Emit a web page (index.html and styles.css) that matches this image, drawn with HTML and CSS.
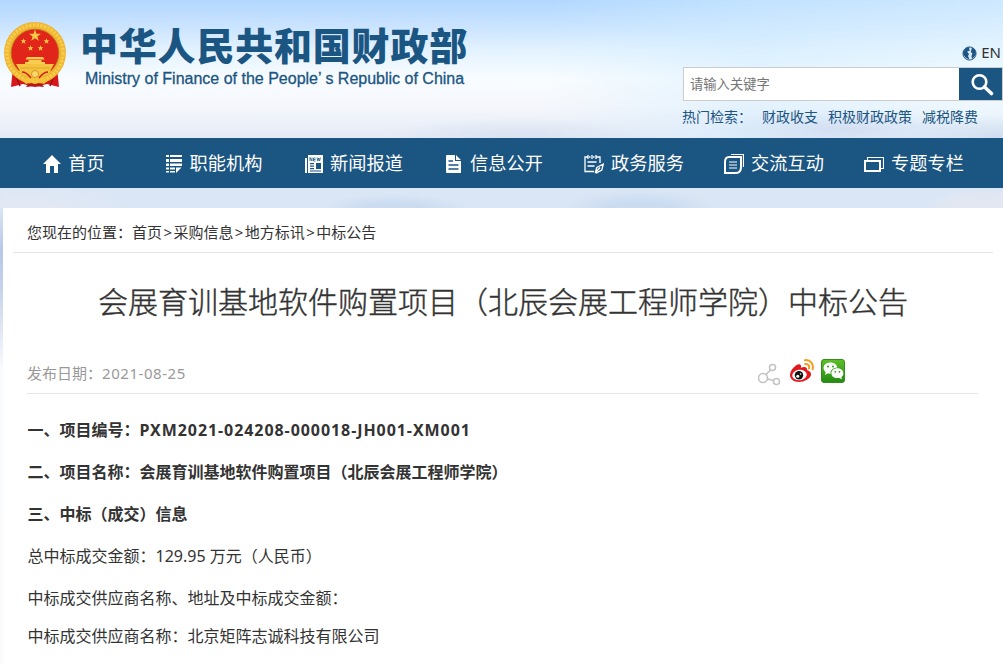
FILE: index.html
```html
<!DOCTYPE html>
<html lang="zh-CN">
<head>
    <meta charset="UTF-8">
    <meta name="viewport" content="width=device-width, initial-scale=1.0">
    <title>会展育训基地软件购置项目（北辰会展工程师学院）中标公告</title>
    <link rel="stylesheet" href="styles.css">
</head>
<body>
    <div class="header">
        <div class="logo">
            <svg class="emblem" viewBox="0 0 62 66">
                <path d="M9 45L7 65l12-3 12 3 12-3 12 3-2-20z" fill="#d6181d"/>
                <path d="M11 51l5 13M51 51l-5 13" stroke="#9f1014" stroke-width="1.5"/>
                <circle cx="31" cy="31" r="27.2" fill="none" stroke="#eeb531" stroke-width="7.5"/>
                <circle cx="31" cy="31" r="28" fill="none" stroke="#f7cc4c" stroke-width="3.5" stroke-dasharray="2.5 1.2"/>
                <circle cx="31" cy="31" r="23.8" fill="#e1251b" stroke="#bb6d16" stroke-width=".8"/>
                <path d="M12 42h38l-4 7-7 4H23l-7-4z" fill="#f4c441"/>
                <path d="M23 35h16l1.500 2.500h-19zM24.500 38h13v2h-13zM21 40h20v2H21z" fill="#f9cd50"/>
                <path d="M16 46h30" stroke="#e5a62a"/>
                <path d="M31 7.500l1.500 4.200 4.500.1-3.600 2.700 1.300 4.300-3.700-2.500-3.700 2.500 1.300-4.300-3.600-2.700 4.500-.1z" fill="#f7c944"/>
                <g fill="#f7c944">
                    <path id="star" d="M19.500 16.200l.8 2 2.100.1-1.600 1.300.6 2.100-1.900-1.200-1.800 1.200.5-2.100-1.600-1.300 2.100-.1z"/>
                    <use href="#star" x="23"/>
                    <use href="#star" x="7" y="7"/>
                    <use href="#star" x="17" y="7"/>
                </g>
                <path d="M15 49c6-1 9 1 11 3 3-4 7-4 10 0 2-2 5-4 11-3-3 3-6 5-10 6l7 3-4 4-9-4-9 4-4-4 7-3c-4-1-8-3-11-6z" fill="#f5c33a"/>
                <path d="M18 50c5 0 7 4 9 6M44 50c-5 0-7 4-9 6" fill="none" stroke="#d21a1b" stroke-width="1.500"/>
                <circle cx="31" cy="52" r="3.500" fill="#f9d76b" stroke="#c9871b" stroke-width=".8"/>
                <path d="M22 65c2-4 6-5 9-2 3-3 7-2 9 2-6-1-12-1-18 0z" fill="#b61619"/>
            </svg>
            <div class="logo-text">
                <div class="logo-cn">中华人民共和国财政部</div>
                <div class="logo-en">Ministry of Finance of the People’ s Republic of China</div>
            </div>
        </div>
        <div class="tools">
            <a class="lang">
                <svg width="15" height="15" viewBox="0 0 15 15">
                    <circle cx="7.500" cy="7.500" r="6.600" fill="#d5e8f6" stroke="#1b5582" stroke-width=".9"/>
                    <path d="M1 6l3-4 4-1-1 2 1 1.500-3 1L7 8l-1 2 1.500 3.500L4 12 1.500 9zM10 1.500l3 2L14 8l-2 3-2 2-.5-3 1-2.500L8.800 6z" fill="#1b5582"/>
                </svg>
                <span>EN</span>
            </a>
            <div class="search">
                <input type="text" placeholder="请输入关键字">
                <button class="search-btn">
                    <svg width="24" height="24" viewBox="0 0 24 24" fill="none" stroke="#fff">
                        <circle cx="9.500" cy="9" r="6.800" stroke-width="2.600"/>
                        <path d="M14.500 14l7 6.500" stroke-width="3.600" stroke-linecap="round"/>
                    </svg>
                </button>
            </div>
            <div class="hot">
                <span class="hot-label">热门检索：</span>
                <a>财政收支</a>
                <a>积极财政政策</a>
                <a>减税降费</a>
            </div>
        </div>
    </div>

    <div class="nav">
        <a>
            <svg width="18" height="18" viewBox="0 0 18 18"><path d="M9 0l9 9h-3v9h-4v-7H7v7H3V9H0z" fill="#fff"/></svg>
            <span>首页</span>
        </a>
        <a>
            <svg width="17" height="18" viewBox="0 0 17 18" fill="#fff"><path d="M0 0h3v2H0zM4 0h12v2H4zM0 4h3v3H0zM4 4h12v3H4zM0 8.500h3v2.500H0zM4 8.500h12v2.500H4zM0 12.500h3v2H0zM4 12.500h5v2H4zM0 16h3v1.500H0zM4 16h5v1.500H4zM10 12.500h5.500L10 18z"/></svg>
            <span>职能机构</span>
        </a>
        <a>
            <svg width="18" height="18" viewBox="0 0 18 18">
                <path d="M0 3h2v15H0zM3 0h15v18H3z" fill="#fff"/>
                <path d="M5 6V2.500l2 3.500V2.500M10.500 3H8.500v3h2M8.500 4.500h2M12 2.500l.8 3.500.9-3 .9 3 .8-3.500" fill="none" stroke="#1b5582" stroke-width=".8"/>
                <path d="M11 8h5v6h-5zM5 8h4v1.200H5zM5 10.500h4v1.200H5zM5 13h4v1.200H5zM5 15.500h11v1H5z" fill="#1b5582"/>
            </svg>
            <span>新闻报道</span>
        </a>
        <a>
            <svg width="18" height="18" viewBox="0 0 18 18"><path d="M2 0h8v6h6v12H2q-1 0-1-1V1q0-1 1-1zM11 0l5 5h-5z" fill="#fff"/><path d="M3.500 6H8M3.500 10h10M3.500 14h10" stroke="#1b5582" stroke-width="1.300"/></svg>
            <span>信息公开</span>
        </a>
        <a>
            <svg width="20" height="20" viewBox="0 0 20 20" fill="none" stroke="#fff" stroke-width="1.300">
                <path d="M4 3H1v14.500h9M12 3h4v6M5 3h1.500M9 3h1.500M4 1v4M8 1v4M12 1v4M3.500 8h9M3.500 12h7"/>
                <path d="M19.300 10l-1.500 6-5.500 3-1-.5 1.500-5zM12 18l4-4.500"/>
            </svg>
            <span>政务服务</span>
        </a>
        <a>
            <svg width="20" height="20" viewBox="0 0 20 20" fill="none" stroke="#fff">
                <path d="M5 3h12v10q0 6-5 6H1V8q0-5 4-5z" stroke-width="2"/>
                <path d="M7 .5h12.500V13M5 8h8M5 11h8M5 14h8" stroke-width="1.200"/>
            </svg>
            <span>交流互动</span>
        </a>
        <a>
            <svg width="20" height="18" viewBox="0 0 20 18" fill="none" stroke="#fff">
                <path d="M1 6h15v10H1z" stroke-width="2"/>
                <path d="M3.500 5V2.500h16v11H17" stroke-width="1.100"/>
            </svg>
            <span>专题专栏</span>
        </a>
    </div>

    <div class="main">
        <div class="crumbs">您现在的位置：首页<i>&gt;</i>采购信息<i>&gt;</i>地方标讯<i>&gt;</i>中标公告</div>
        <h1>会展育训基地软件购置项目（北辰会展工程师学院）中标公告</h1>
        <div class="info">
            <div class="date">发布日期：<span>2021-08-25</span></div>
            <div class="share">
                <svg width="24" height="24" viewBox="0 0 24 24" fill="none" stroke="#c3c3c3" stroke-width="1.600">
                    <circle cx="5" cy="15" r="4.500"/><circle cx="14.500" cy="4.500" r="3"/><circle cx="18.500" cy="18.500" r="3"/>
                    <path d="M8 11.500L12.500 7M9.700 16l5.800 1.500"/>
                </svg>
                <svg width="25" height="25" viewBox="0 0 25 25">
                    <path d="M1 16C1 11 8 4 11 5.500c1.500.7 1 2.500.8 3.200 3-1.200 6.700-1.200 6.200 2.300 6 2 5 7-.5 10C10 25 1 22.500 1 16z" fill="#e1181d"/>
                    <ellipse cx="10.500" cy="16" rx="7.300" ry="5.200" fill="#fff" transform="rotate(-8 10.500 16)"/>
                    <circle cx="10" cy="16.200" r="4.200" fill="#111"/><circle cx="8.800" cy="17.300" r="1.500" fill="#fff"/><circle cx="11.600" cy="15" r=".8" fill="#fff"/>
                    <path d="M16 1.200c5-.8 9 3.800 7.600 9M16.200 5c3-.5 4.500 2 3.800 4.500" fill="none" stroke="#f39b1a" stroke-width="2" stroke-linecap="round"/>
                </svg>
                <svg width="24" height="24" viewBox="0 0 24 24">
                    <defs><linearGradient id="wx" x2="0" y2="1"><stop stop-color="#5fbf28"/><stop offset="1" stop-color="#238a13"/></linearGradient></defs>
                    <rect x=".5" y=".5" width="23" height="23" rx="2.500" fill="url(#wx)" stroke="#328f1c"/>
                    <path d="M9.300 3.500c4 0 6.700 2.300 6.900 5-4.300.2-7.300 3-6.600 6.400L7 14.300l-3 1.600.7-2.700C.5 10 2.500 3.500 9.300 3.500z" fill="#fff"/>
                    <path d="M16.200 9.300c6 0 8 6 4.200 8.700l.5 2.200-2.500-1.300c-5 1-8-1.500-8-4.600 0-2.700 2.500-5 5.800-5z" fill="#fff"/>
                    <g fill="#329a1b"><circle cx="7" cy="7.500" r="1"/><circle cx="12" cy="7.500" r="1"/><circle cx="14.300" cy="12.800" r=".9"/><circle cx="18.400" cy="12.800" r=".9"/></g>
                </svg>
            </div>
        </div>
        <div class="content">
            <p><b>一、项目编号：<span class="code">PXM2021-024208-000018-JH001-XM001</span></b></p>
            <p><b>二、项目名称：会展育训基地软件购置项目（北辰会展工程师学院）</b></p>
            <p><b>三、中标（成交）信息</b></p>
            <p>总中标成交金额：<span class="num">129.95</span> 万元（人民币）</p>
            <p>中标成交供应商名称、地址及中标成交金额：</p>
            <p class="row">中标成交供应商名称：北京矩阵志诚科技有限公司</p>
        </div>
    </div>
</body>
</html>
```

FILE: styles.css
```css
body {
    font-family: "Noto Sans", "Noto Sans CJK SC", sans-serif;
    margin: 0;
    height: 663px;
    overflow: hidden;
    color: #333;
    background:
        radial-gradient(ellipse 75px 16px at 395px 210px, #cbdcf1 40%, transparent) no-repeat 0 0 / 100% 208px,
        radial-gradient(ellipse 80px 20px at 640px 210px, #cbdcf1 40%, transparent) no-repeat 0 0 / 100% 208px,
        radial-gradient(ellipse 60px 20px at 985px 208px, #e3e7f2 60%, transparent) no-repeat 0 0 / 100% 208px,
        radial-gradient(ellipse 110px 26px at 20px 208px, #e2e8f4 30%, transparent) no-repeat 0 0 / 100% 208px,
        linear-gradient(#dfe7f5 0, #dae6f5 208px, #b7c7e6 250px, #c3d1ea 285px, #fafbfd 370px, #fafafb 100%);
}

.header {
    height: 138px;
    display: flex;
    justify-content: space-between;
    background:
        radial-gradient(ellipse 130px 24px at 1010px 138px, #cfdbef, transparent),
        radial-gradient(ellipse 130px 22px at 840px 130px, #d3dff2, transparent),
        radial-gradient(ellipse 140px 20px at 520px 138px, #d8e2f2, transparent),
        linear-gradient(90deg, transparent 55%, rgba(210, 237, 255, 0.5) 75%, rgba(232, 248, 255, 0.5)),
        linear-gradient(#b2d7ff 0, #c9e3ff 25px, #e3f2ff 50px, #f8fcff 78px, #f5f7fc 105px, #e5ebf6 138px);
}

.logo {
    display: flex;
    padding: 22px 0 0 4px;
}

.emblem {
    width: 62px;
    height: 66px;
}

.logo-text {
    padding-left: 14px;
    color: #1b5582;
    white-space: nowrap;
}

.logo-cn {
    font-size: 38px;
    font-weight: 900;
    line-height: 46px;
    letter-spacing: 0.8px;
}

.logo-en {
    font-family: "Liberation Sans", Arial, sans-serif;
    font-size: 16px;
    line-height: 18px;
    margin: 2px 0 0 5px;
    -webkit-text-stroke: 0.3px #1b5582;
}

.tools {
    width: 320px;
    padding-top: 42px;
}

.lang {
    display: flex;
    justify-content: flex-end;
    align-items: center;
    gap: 4px;
    height: 20px;
    margin-bottom: 5px;
    padding-right: 2px;
    font-size: 15px;
}

.lang svg {
    margin-top: 2px;
}

.search {
    display: flex;
    box-sizing: border-box;
    height: 34px;
    border: 1px solid #ccc;
    background: #fff;
}

.search input {
    flex: 1;
    min-width: 0;
    border: 0;
    padding: 0 6px;
    font-family: inherit;
    font-size: 13.3px;
    background: none;
}

.search input::placeholder {
    color: #757575;
}

.search-btn {
    width: 43px;
    border: 0;
    padding: 5px 0 0 3px;
    background: #1b5582;
}

.hot {
    display: flex;
    gap: 10px;
    line-height: 32px;
    font-size: 14px;
    color: #1b5582;
    white-space: nowrap;
}

.hot-label {
    margin-left: -1px;
}

.nav {
    display: flex;
    height: 50px;
    padding-left: 4px;
    background: #1b5582;
    color: #fff;
    font-size: 18.2px;
}

.nav a {
    width: 140px;
    display: flex;
    justify-content: center;
    align-items: center;
    gap: 7px;
    white-space: nowrap;
}

.nav svg {
    margin-top: 2px;
}

.nav span {
    margin-top: -2px;
}

.main {
    margin: 20px 0 0 3px;
    height: 455px;
    padding: 0 10px;
    background: #fff;
}

.crumbs {
    height: 44px;
    line-height: 49px;
    padding-left: 14px;
    font-size: 15px;
    border-bottom: 1px solid #e5e5e5;
}

.crumbs i {
    display: inline-block;
    width: 11.4px;
    font-style: normal;
    text-align: center;
}

h1 {
    margin: 0;
    height: 100px;
    line-height: 98px;
    font-size: 30px;
    font-weight: 300;
    text-align: center;
    white-space: nowrap;
    -webkit-text-stroke: 0.4px #333;
}

.info {
    display: flex;
    height: 40px;
    margin: 0 15px 0 14px;
    border-bottom: 1px solid #e5e5e5;
}

.date {
    width: 731px;
    line-height: 40px;
    font-size: 15px;
    color: #999;
}

.date span {
    letter-spacing: 0.55px;
}

.share {
    display: flex;
    gap: 7px;
    padding-top: 6px;
}

.share svg:first-child {
    margin-top: 4px;
}

.content {
    padding: 15px 14px 0 14.5px;
    font-size: 16px;
}

.content p {
    margin: 0;
    line-height: 42px;
    white-space: nowrap;
}

.content .code {
    letter-spacing: 0.93px;
}

.content .row {
    line-height: 34px;
}
```
